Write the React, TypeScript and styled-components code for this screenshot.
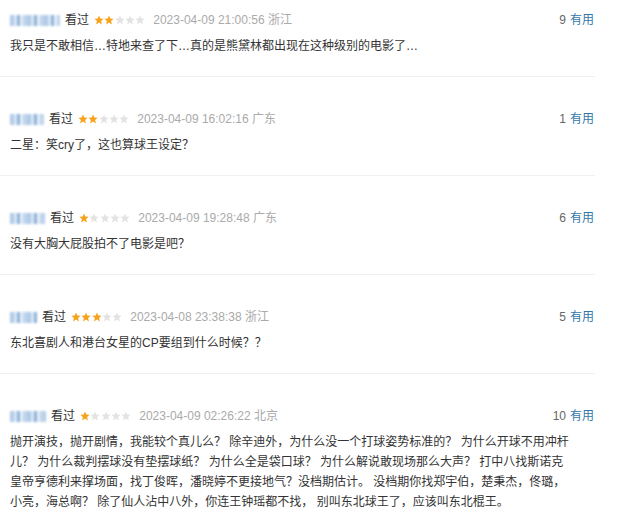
import React from 'react';
import styled, { createGlobalStyle } from 'styled-components';

const GlobalStyle = createGlobalStyle`
  html, body { margin: 0; padding: 0; background: #fff; }
  body {
    font-family: "Liberation Sans", Arial, "Noto Sans CJK SC", sans-serif;
    font-size: 12px;
    color: #333;
  }
`;

const List = styled.div`
  width: 595px;
`;

const Item = styled.div`
  padding: 32px 1px 20px 10px;
  border-bottom: 1px solid #efefef;
  &:first-child { padding-top: 10px; }
  &:last-child { border-bottom: none; }
`;

const Header = styled.div`
  display: flex;
  align-items: center;
  height: 20px;
  line-height: 20px;
  white-space: nowrap;
`;

const UserMask = styled.span<{ $w: number }>`
  display: inline-block;
  width: ${p => p.$w}px;
  height: 11px;
  margin-right: 5px;
  background:
    repeating-linear-gradient(90deg, #a9c6e6 0 4px, #d6e4f2 4px 7px, #86abd6 7px 10px, #e2ecf6 10px 13px, #b9d0ea 13px 17px);
  filter: blur(1px);
  opacity: 0.9;
`;

const Watched = styled.span`
  color: #333;
  margin-right: 5px;
`;

const Stars = styled.span`
  display: inline-flex;
  align-items: center;
  gap: 0.3px;
  margin-right: 8px;
`;

const DateText = styled.span`
  color: #aaa;
`;

const Helpful = styled.span`
  margin-left: auto;
  color: #666;
`;

const Useful = styled.span`
  color: #37a;
  margin-left: 4px;
`;

const Comment = styled.p`
  margin: 6px 0 0;
  line-height: 20px;
  color: #333;
  white-space: nowrap;
`;

const Star: React.FC<{ on: boolean }> = ({ on }) => (
  <svg width="10" height="10" viewBox="0 0 10 10">
    <path
      d="M5 0.5 L6.3 3.5 L9.6 3.8 L7.1 6 L7.9 9.4 L5 7.6 L2.1 9.4 L2.9 6 L0.4 3.8 L3.7 3.5 Z"
      fill={on ? '#f7a21b' : '#e3e3e3'}
    />
  </svg>
);

type Review = {
  userW: number;
  stars: number;
  time: string;
  region: string;
  votes: number;
  lines: string[];
};

const reviews: Review[] = [
  {
    userW: 50,
    stars: 2,
    time: '2023-04-09 21:00:56',
    region: '浙江',
    votes: 9,
    lines: ['我只是不敢相信…特地来查了下…真的是熊黛林都出现在这种级别的电影了…'],
  },
  {
    userW: 34,
    stars: 2,
    time: '2023-04-09 16:02:16',
    region: '广东',
    votes: 1,
    lines: ['二星：笑cry了，这也算球王设定？'],
  },
  {
    userW: 35,
    stars: 1,
    time: '2023-04-09 19:28:48',
    region: '广东',
    votes: 6,
    lines: ['没有大胸大屁股拍不了电影是吧？'],
  },
  {
    userW: 27,
    stars: 3,
    time: '2023-04-08 23:38:38',
    region: '浙江',
    votes: 5,
    lines: ['东北喜剧人和港台女星的CP要组到什么时候？？'],
  },
  {
    userW: 36,
    stars: 1,
    time: '2023-04-09 02:26:22',
    region: '北京',
    votes: 10,
    lines: [
      '抛开演技，抛开剧情，我能较个真儿么？ 除辛迪外，为什么没一个打球姿势标准的？ 为什么开球不用冲杆',
      '儿？ 为什么裁判摆球没有垫摆球纸？ 为什么全是袋口球？ 为什么解说敢现场那么大声？ 打中八找斯诺克',
      '皇帝亨德利来撑场面，找丁俊晖，潘晓婷不更接地气？没档期估计。 没档期你找郑宇伯，楚秉杰，佟璐，',
      '小亮，海总啊？ 除了仙人沾中八外，你连王钟瑶都不找， 别叫东北球王了，应该叫东北棍王。',
    ],
  },
];

export default function App() {
  return (
    <>
      <GlobalStyle />
      <List>
        {reviews.map((r, i) => (
          <Item key={i}>
            <Header>
              <UserMask $w={r.userW} />
              <Watched>看过</Watched>
              <Stars>
                {[0, 1, 2, 3, 4].map(k => (
                  <Star key={k} on={k < r.stars} />
                ))}
              </Stars>
              <DateText>
                {r.time} {r.region}
              </DateText>
              <Helpful>
                {r.votes}
                <Useful>有用</Useful>
              </Helpful>
            </Header>
            <Comment>
              {r.lines.map((l, j) => (
                <React.Fragment key={j}>
                  {j > 0 && <br />}
                  {l}
                </React.Fragment>
              ))}
            </Comment>
          </Item>
        ))}
      </List>
    </>
  );
}
